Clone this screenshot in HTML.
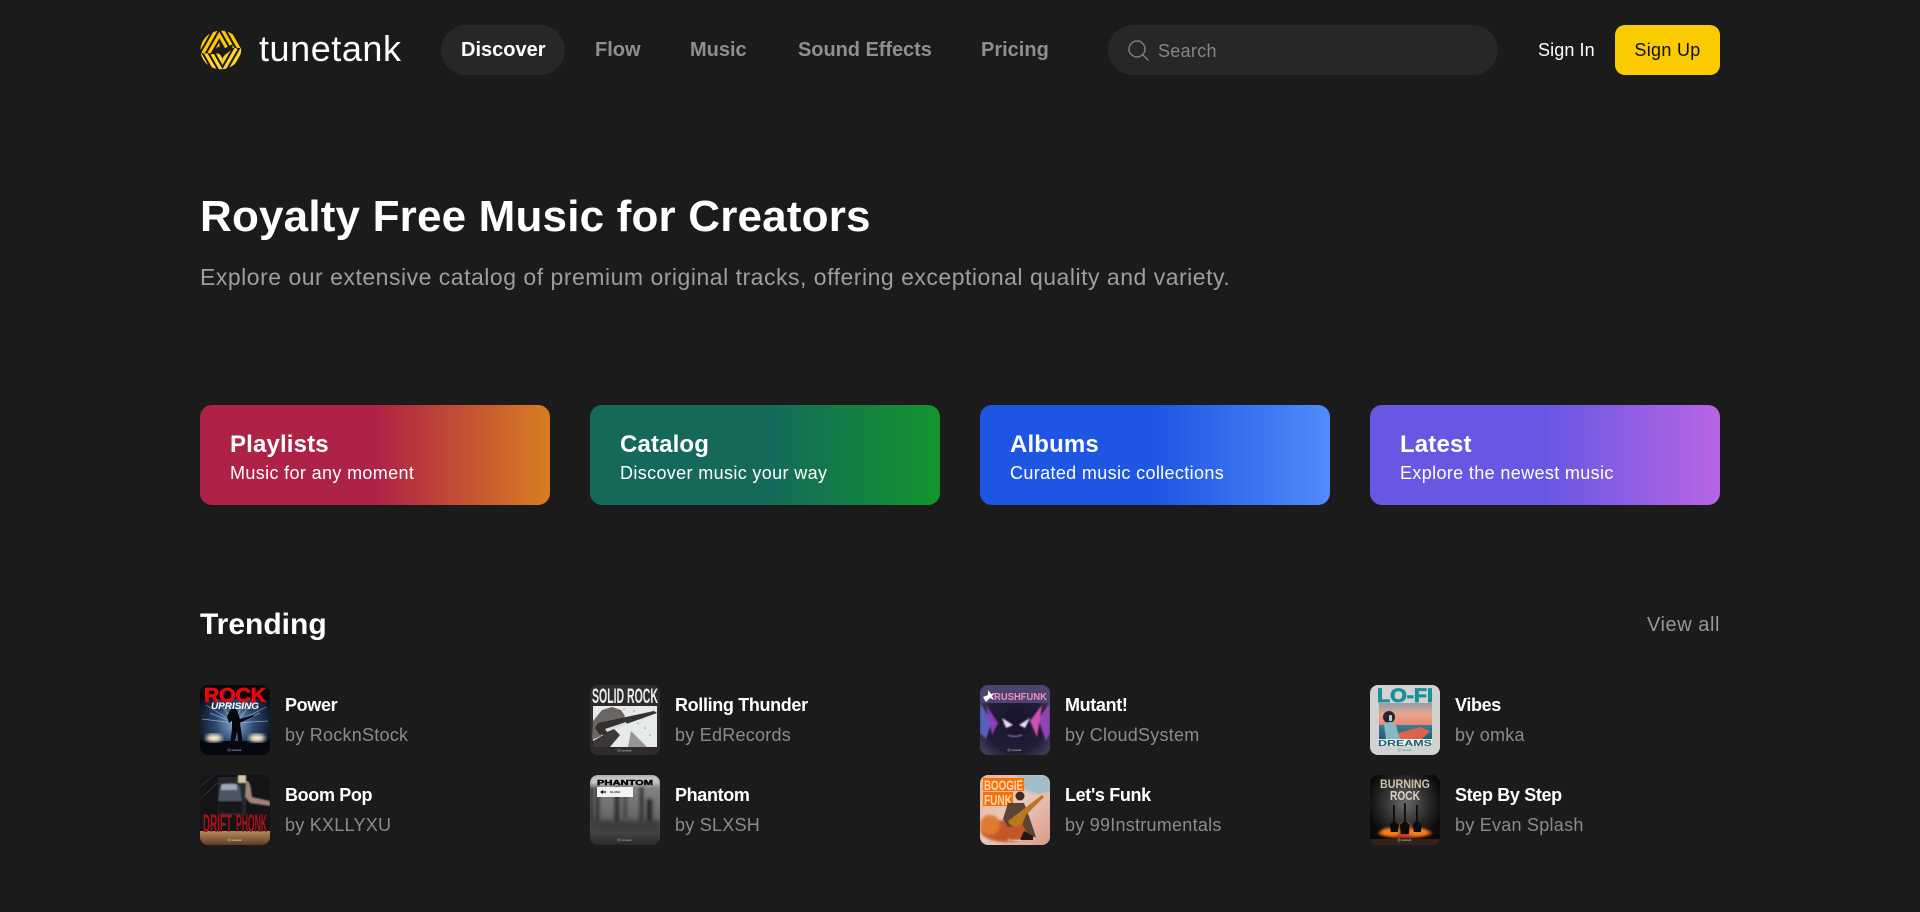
<!DOCTYPE html>
<html lang="en">
<head>
<meta charset="utf-8">
<title>tunetank</title>
<style>
html,body{margin:0;padding:0;background:#1b1b1b;}
body{position:relative;width:1920px;height:912px;overflow:hidden;font-family:"Liberation Sans",sans-serif;color:#fff;}
.t{position:absolute;white-space:nowrap;}
.nav{top:38px;font-size:20px;line-height:24px;font-weight:700;color:#8f8f8f;}
.pill{position:absolute;left:441px;top:25px;width:124px;height:50px;border-radius:25px;background:#272727;}
.search{position:absolute;left:1108px;top:25px;width:390px;height:50px;border-radius:25px;background:#272727;}
.signup{position:absolute;left:1615px;top:25px;width:105px;height:50px;border-radius:10px;background:#facb00;color:#111;font-size:18px;line-height:50px;text-align:center;letter-spacing:.3px;}
.card{position:absolute;top:405px;width:350px;height:100px;border-radius:12px;}
.card b{position:absolute;left:30px;top:25px;font-size:24px;line-height:30px;font-weight:700;white-space:nowrap;letter-spacing:.15px;}
.card span{position:absolute;left:30px;top:56px;font-size:18px;line-height:24px;white-space:nowrap;letter-spacing:.36px;}
.thumb{position:absolute;width:70px;height:70px;border-radius:8px;overflow:hidden;display:block;}
.it{font-size:18px;line-height:24px;font-weight:700;letter-spacing:-.35px;}
.by{font-size:18px;line-height:24px;color:#8f8a86;letter-spacing:.25px;}
svg text{font-family:"Liberation Sans",sans-serif;}
</style>
</head>
<body>

<!-- Header -->
<svg style="position:absolute;left:200px;top:30px" width="42" height="40" viewBox="0 0 125 120">
  <defs>
    <mask id="ring"><ellipse cx="62" cy="60" rx="61" ry="58" fill="#fff"/><path d="M26 74 54 50 68 58 98 42 96 58 68 80 54 70z" fill="#000"/></mask>
    <clipPath id="q1"><rect x="0" y="0" width="58" height="70"/></clipPath>
    <clipPath id="q2"><rect x="58" y="0" width="67" height="54"/></clipPath>
    <clipPath id="q3"><rect x="66" y="54" width="59" height="66"/></clipPath>
    <clipPath id="q4"><rect x="0" y="70" width="66" height="50"/></clipPath>
  </defs>
  <g mask="url(#ring)" stroke-width="9.500" fill="none">
    <path clip-path="url(#q1)" stroke="#ffc800" d="M-10 70 30 0M8 70 48 0M26 70 66 0M44 70 84 0"/>
    <path clip-path="url(#q2)" stroke="#ffc800" d="M46 -5 86 65M64 -5 104 65M82 -5 122 65M100 -5 140 65"/>
    <path clip-path="url(#q3)" stroke="#ffd633" d="M50 125 90 55M68 125 108 55M86 125 126 55M104 125 144 55"/>
    <path clip-path="url(#q4)" stroke="#ffd633" d="M-10 55 30 125M8 55 48 125M26 55 66 125M44 55 84 125"/>
  </g>
</svg>
<div class="t" style="left:259px;top:28px;font-size:36px;line-height:42px;letter-spacing:.55px;">tunetank</div>

<div class="pill"></div>
<div class="t nav" style="left:461px;color:#fff;">Discover</div>
<div class="t nav" style="left:595px;">Flow</div>
<div class="t nav" style="left:690px;">Music</div>
<div class="t nav" style="left:798px;letter-spacing:-.05px;">Sound Effects</div>
<div class="t nav" style="left:981px;">Pricing</div>

<div class="search"></div>
<svg style="position:absolute;left:1127px;top:39px" width="23" height="23" viewBox="0 0 23 23" fill="none" stroke="#7d7d7d" stroke-width="1.5">
  <circle cx="10" cy="10" r="8"/><path d="M16 16 21 21" stroke-linecap="round"/>
</svg>
<div class="t" style="left:1158px;top:39px;font-size:18px;line-height:24px;color:#868686;letter-spacing:.3px;">Search</div>
<div class="t" style="left:1538px;top:38px;font-size:18px;line-height:24px;color:#fff;letter-spacing:.1px;">Sign In</div>
<div class="signup">Sign Up</div>

<!-- Hero -->
<div class="t" style="left:200px;top:190px;font-size:44px;line-height:54px;font-weight:700;letter-spacing:.18px;">Royalty Free Music for Creators</div>
<div class="t" style="left:200px;top:263px;font-size:23px;line-height:28px;color:#a19d99;letter-spacing:.51px;">Explore our extensive catalog of premium original tracks, offering exceptional quality and variety.</div>

<!-- Cards -->
<div class="card" style="left:200px;background:linear-gradient(90deg,#ae2246 50%,#d87e22 100%);"><b>Playlists</b><span>Music for any moment</span></div>
<div class="card" style="left:590px;background:linear-gradient(90deg,#14695b 50%,#12952d 100%);"><b>Catalog</b><span>Discover music your way</span></div>
<div class="card" style="left:980px;background:linear-gradient(90deg,#1e55e3 50%,#508cfa 100%);"><b>Albums</b><span>Curated music collections</span></div>
<div class="card" style="left:1370px;background:linear-gradient(90deg,#6857e3 50%,#b865e5 100%);"><b>Latest</b><span>Explore the newest music</span></div>

<!-- Trending -->
<div class="t" style="left:200px;top:606px;font-size:30px;line-height:38px;font-weight:700;">Trending</div>
<div class="t" style="left:1647px;top:613px;font-size:20px;line-height:24px;color:#9a9693;letter-spacing:.55px;">View all</div>

<!-- 1 Rock Uprising -->
<svg class="thumb" style="left:200px;top:685px" viewBox="0 0 70 70">
  <defs>
    <radialGradient id="a1" cx=".5" cy=".55" r=".6"><stop offset="0" stop-color="#8fb0d6"/><stop offset=".45" stop-color="#2c4a72"/><stop offset="1" stop-color="#060a14"/></radialGradient>
    <filter id="b1"><feGaussianBlur stdDeviation="2"/></filter>
  </defs>
  <rect width="70" height="70" fill="url(#a1)"/>
  <rect width="70" height="14" fill="#07070c"/>
  <g stroke="#c4d8f0" stroke-width=".7" opacity=".65"><path d="M35 38 6 20M35 38 18 16M35 38 27 14M35 38 44 14M35 38 54 16M35 38 66 22M35 38 2 34M35 38 68 36M35 38 10 28M35 38 60 28"/></g>
  <rect y="56" width="70" height="14" fill="#050810"/>
  <ellipse cx="14" cy="53" rx="8" ry="4" fill="#fff2d0" filter="url(#b1)"/>
  <ellipse cx="57" cy="53" rx="8" ry="4" fill="#fff2d0" filter="url(#b1)"/>
  <path d="M30 25c3-3 8-1 8 3l2 6 13-4 1 1-12 6-2 1 1 7 2 15h-4l-2-13-3 13h-4l2-16 0-8-3 2-2-6z" fill="#06080d"/>
  <text x="4" y="17" font-size="20" font-weight="700" fill="#e6060e" stroke="#e6060e" stroke-width=".8" textLength="62" lengthAdjust="spacingAndGlyphs">ROCK</text>
  <text x="11" y="24" font-size="9" font-weight="700" font-style="italic" fill="#fff" textLength="48" lengthAdjust="spacingAndGlyphs">UPRISING</text>
  <circle cx="29" cy="65" r="1.2" fill="none" stroke="#ccc" stroke-width=".4"/>
  <text x="31.5" y="66" font-size="2.6" fill="#ccc">tunetank</text>
</svg>

<!-- 2 Drift Phonk -->
<svg class="thumb" style="left:200px;top:775px" viewBox="0 0 70 70">
  <defs>
    <linearGradient id="a2" x1="0" y1="0" x2="0" y2="1"><stop offset="0" stop-color="#b98a5e"/><stop offset="1" stop-color="#5e3c22"/></linearGradient>
    <filter id="b2"><feGaussianBlur stdDeviation=".8"/></filter>
  </defs>
  <rect width="70" height="70" fill="#141416"/>
  <g stroke="#2e2e30" stroke-width="1"><path d="M0 12 14 0M0 24 22 4"/></g>
  <rect x="18" y="2" width="28" height="38" fill="#22282e"/>
  <g filter="url(#b2)">
    <rect x="38" y="0" width="8" height="8" fill="#d5c7a8"/>
    <path d="M46 6c3 0 4 2 5 8l1 8 18 4v5l-20-3-5-6z" fill="#a08277"/>
    <path d="M20 12c2-5 18-5 20 0l2 14H18z" fill="#4c5762"/>
    <rect x="21" y="9" width="16" height="6" fill="#9aa9b5"/>
    <rect x="18" y="26" width="24" height="12" fill="#15181c"/>
  </g>
  <rect y="56" width="70" height="14" fill="url(#a2)"/>
  <text x="3" y="57" font-size="25" font-weight="700" fill="#a8121c" textLength="29" lengthAdjust="spacingAndGlyphs">DRIFT</text>
  <text x="36" y="57" font-size="25" font-weight="700" fill="#a8121c" textLength="31" lengthAdjust="spacingAndGlyphs">PHONK</text>
  <circle cx="29" cy="65" r="1.2" fill="none" stroke="#eee" stroke-width=".4"/>
  <text x="31.5" y="66" font-size="2.6" fill="#eee">tunetank</text>
</svg>

<!-- 3 Solid Rock -->
<svg class="thumb" style="left:590px;top:685px" viewBox="0 0 70 70">
  <rect width="70" height="70" fill="#2f2b2c"/>
  <text x="2" y="18" font-size="21" font-weight="700" fill="#e9eceb" textLength="66" lengthAdjust="spacingAndGlyphs">SOLID ROCK</text>
  <rect x="3" y="21" width="64" height="41" fill="#e6ebe9"/>
  <path d="M3 36 12 25l10-3 9 3 4 6-6 8-12 4-6 8-9 4z" fill="#6a6664"/>
  <path d="M8 38 64 26l3 2-42 15-7 8-9-2-4-6z" fill="#33302f"/>
  <path d="M15 44 36 37l1 2-20 8z" fill="#d8dcda"/>
  <path d="M3 56 24 44l6 6-10 12H3z" fill="#3c3837"/>
  <path d="M38 62 41 46l10 10 6 6z" fill="#55504e" opacity=".55"/>
  <g fill="#777" opacity=".7"><circle cx="48" cy="38" r=".8"/><circle cx="55" cy="43" r=".8"/><circle cx="60" cy="50" r=".8"/><circle cx="44" cy="26" r=".8"/><circle cx="34" cy="24" r=".8"/><circle cx="52" cy="34" r=".6"/></g>
  <circle cx="29" cy="65.5" r="1.2" fill="none" stroke="#ccc" stroke-width=".4"/>
  <text x="31.5" y="66.5" font-size="2.6" fill="#ccc">tunetank</text>
</svg>

<!-- 4 Phantom -->
<svg class="thumb" style="left:590px;top:775px" viewBox="0 0 70 70">
  <defs>
    <linearGradient id="a4" x1="0" y1="0" x2="0" y2="1"><stop offset="0" stop-color="#8f8f8f"/><stop offset=".55" stop-color="#6a6a6a"/><stop offset="1" stop-color="#2a2a2a"/></linearGradient>
    <filter id="b4" x="-20%" y="-20%" width="140%" height="140%"><feGaussianBlur stdDeviation="1.8"/></filter>
  </defs>
  <rect width="70" height="70" fill="url(#a4)"/>
  <g filter="url(#b4)" fill="#222">
    <rect x="6" y="0" width="3" height="46"/><rect x="25" y="4" width="4" height="42"/><rect x="34" y="0" width="2" height="44"/><rect x="50" y="0" width="3" height="46"/><rect x="57" y="24" width="5" height="22"/><rect x="0" y="0" width="3" height="46"/>
    <rect x="0" y="46" width="70" height="10" fill="#3d3d3d"/>
    <rect x="0" y="0" width="70" height="10" fill="#c6c6c6"/>
  </g>
  <text x="7" y="10" font-size="7" font-weight="700" fill="#050505" stroke="#050505" stroke-width=".4" textLength="56" lengthAdjust="spacingAndGlyphs">PHANTOM</text>
  <rect x="7" y="12" width="36" height="10" fill="#f3f3f3"/>
  <path d="M10 17l3-2v1.4h3v1.2h-3V19z" fill="#111"/>
  <text x="20" y="18" font-size="3" font-weight="700" fill="#111">SLXSH</text>
  <circle cx="29" cy="65" r="1.2" fill="none" stroke="#bbb" stroke-width=".4"/>
  <text x="31.5" y="66" font-size="2.6" fill="#bbb">tunetank</text>
</svg>

<!-- 5 Krush Funk -->
<svg class="thumb" style="left:980px;top:685px" viewBox="0 0 70 70">
  <defs>
    <radialGradient id="a5" cx=".5" cy=".55" r=".6"><stop offset="0" stop-color="#18132b"/><stop offset=".7" stop-color="#221d36"/><stop offset="1" stop-color="#403d5a"/></radialGradient>
    <filter id="b5"><feGaussianBlur stdDeviation=".8"/></filter>
  </defs>
  <rect width="70" height="70" fill="url(#a5)"/>
  <rect width="70" height="18" fill="#4c4470"/>
  <g filter="url(#b5)">
    <path d="M0 18 12 36 6 54 0 48z" fill="#5260bc"/>
    <path d="M70 18 58 34 66 56 70 48z" fill="#9045b4"/>
    <path d="M6 20 18 38 12 50z" fill="#8d3db5"/>
    <path d="M62 20 50 36 57 52z" fill="#d24fb5"/>
    <path d="M22 33 33 40 26 43z" fill="#eadcff"/>
    <path d="M50 33 39 40 45 43z" fill="#eadcff"/>
    <path d="M28 50q7 3 14 0" fill="none" stroke="#a08ad8" stroke-width="1"/>
  </g>
  <path d="M3 12 8 10 8 5 11 9 15 8 12 11 14 15 10 13 6 17z" fill="#fff"/>
  <text x="14" y="15" font-size="10" font-weight="700" fill="#f28cc0" textLength="53" lengthAdjust="spacingAndGlyphs">RUSHFUNK</text>
  <circle cx="29" cy="65" r="1.2" fill="none" stroke="#ccc" stroke-width=".4"/>
  <text x="31.5" y="66" font-size="2.6" fill="#ccc">tunetank</text>
</svg>

<!-- 6 Boogie Funk -->
<svg class="thumb" style="left:980px;top:775px" viewBox="0 0 70 70">
  <defs>
    <linearGradient id="a6" x1="0" y1="0" x2="1" y2="1"><stop offset="0" stop-color="#e8b49a"/><stop offset=".5" stop-color="#ebc8bc"/><stop offset="1" stop-color="#d99a88"/></linearGradient>
    <filter id="b6"><feGaussianBlur stdDeviation="1.4"/></filter>
  </defs>
  <rect width="70" height="70" fill="url(#a6)"/>
  <path d="M38 0h32v16c-10 5-22 3-32-6z" fill="#88bace" opacity=".75" filter="url(#b6)"/>
  <ellipse cx="26" cy="56" rx="25" ry="11" fill="#c0582a" filter="url(#b6)"/>
  <ellipse cx="10" cy="50" rx="10" ry="10" fill="#e07c30" filter="url(#b6)"/>
  <rect x="3" y="3" width="41" height="13" fill="#f6700e"/>
  <text x="4" y="15" font-size="14" font-weight="700" fill="#ffd9a8" textLength="39" lengthAdjust="spacingAndGlyphs">BOOGIE</text>
  <rect x="3" y="17" width="30" height="14" fill="#f6700e"/>
  <text x="4" y="30" font-size="15" font-weight="700" fill="#ffd9a8" textLength="28" lengthAdjust="spacingAndGlyphs">FUNK</text>
  <circle cx="40" cy="21" r="4.5" fill="#3a2a20"/>
  <path d="M28 28h16l6 16 6 18h-7l-6-12-15 2-5-8z" fill="#5a4436"/>
  <path d="M28 46 62 20l2 2-18 18-4 10c-5 3-12 2-14-4z" fill="#b8761e"/>
  <path d="M44 56l9 5v4H40z" fill="#241812"/>
  <circle cx="29" cy="65" r="1.2" fill="none" stroke="#fff" stroke-width=".4"/>
  <text x="31.5" y="66" font-size="2.6" fill="#fff">tunetank</text>
</svg>

<!-- 7 Lo-Fi Dreams -->
<svg class="thumb" style="left:1370px;top:685px" viewBox="0 0 70 70">
  <defs>
    <linearGradient id="a7" x1="0" y1="0" x2="0" y2="1"><stop offset="0" stop-color="#8f9fa8"/><stop offset=".3" stop-color="#e8a58c"/><stop offset=".6" stop-color="#e88a70"/><stop offset=".62" stop-color="#3a7c92"/><stop offset="1" stop-color="#1e5c74"/></linearGradient>
  </defs>
  <rect width="70" height="70" fill="#d2d2d0"/>
  <text x="7" y="17" font-size="19" font-weight="700" fill="#169099" stroke="#169099" stroke-width=".8" textLength="56" lengthAdjust="spacingAndGlyphs">LO-FI</text>
  <rect x="9" y="18" width="53" height="36" fill="url(#a7)"/>
  <circle cx="19" cy="32" r="6" fill="#2b2430"/>
  <path d="M14 40c2-4 10-4 12 0l2 8 6 6H16z" fill="#86bac2"/>
  <path d="M28 48 50 42l10 4-8 8H30z" fill="#d9664c"/>
  <rect x="19" y="30" width="3" height="6" rx="1" fill="#b6d2d8"/>
  <rect x="8" y="54" width="54" height="7" fill="#eeeeec"/>
  <text x="8" y="61" font-size="8" font-weight="700" fill="#0f5f70" textLength="54" lengthAdjust="spacingAndGlyphs">DREAMS</text>
  <circle cx="29" cy="65" r="1.2" fill="none" stroke="#2a8d97" stroke-width=".4"/>
  <text x="31.5" y="66" font-size="2.6" fill="#2a8d97">tunetank</text>
</svg>

<!-- 8 Burning Rock -->
<svg class="thumb" style="left:1370px;top:775px" viewBox="0 0 70 70">
  <defs>
    <radialGradient id="a8" cx=".5" cy=".4" r=".55"><stop offset="0" stop-color="#6a6968"/><stop offset=".6" stop-color="#2c2c2c"/><stop offset="1" stop-color="#0a0a0a"/></radialGradient>
    <filter id="b8" x="-20%" y="-50%" width="140%" height="200%"><feGaussianBlur stdDeviation="1.3"/></filter>
  </defs>
  <rect width="70" height="70" fill="url(#a8)"/>
  <g filter="url(#b8)">
    <ellipse cx="35" cy="58" rx="27" ry="5" fill="#c9431a"/>
    <ellipse cx="20" cy="57" rx="9" ry="4" fill="#f5801e"/>
    <ellipse cx="48" cy="57" rx="10" ry="4" fill="#f5801e"/>
    <ellipse cx="35" cy="52" rx="6" ry="5" fill="#e0601a"/>
  </g>
  <g fill="#0c0c0c">
    <path d="M23 30h1.800v16l4 4-1 7h-7l-1-7 3.200-4z"/>
    <path d="M34 28h1.800v18l4 4-1 9h-8l-1-9 4.200-4z"/>
    <path d="M46 30h1.800v16l4 4-1 7h-7l-1-7 3.200-4z"/>
  </g>
  <rect y="64" width="70" height="6" fill="#33211a"/>
  <text x="10" y="13" font-size="12" font-weight="700" fill="#cfc3a8" textLength="50" lengthAdjust="spacingAndGlyphs">BURNING</text>
  <text x="20" y="25" font-size="13" font-weight="700" fill="#d6d2c8" textLength="30" lengthAdjust="spacingAndGlyphs">ROCK</text>
  <circle cx="29" cy="65" r="1.2" fill="none" stroke="#ddd" stroke-width=".4"/>
  <text x="31.5" y="66" font-size="2.6" fill="#ddd">tunetank</text>
</svg>

<!-- Track text -->
<div class="t it" style="left:285px;top:693px;">Power</div>
<div class="t by" style="left:285px;top:723px;">by RocknStock</div>
<div class="t it" style="left:285px;top:783px;">Boom Pop</div>
<div class="t by" style="left:285px;top:813px;">by KXLLYXU</div>

<div class="t it" style="left:675px;top:693px;">Rolling Thunder</div>
<div class="t by" style="left:675px;top:723px;">by EdRecords</div>
<div class="t it" style="left:675px;top:783px;">Phantom</div>
<div class="t by" style="left:675px;top:813px;">by SLXSH</div>

<div class="t it" style="left:1065px;top:693px;">Mutant!</div>
<div class="t by" style="left:1065px;top:723px;">by CloudSystem</div>
<div class="t it" style="left:1065px;top:783px;">Let's Funk</div>
<div class="t by" style="left:1065px;top:813px;">by 99Instrumentals</div>

<div class="t it" style="left:1455px;top:693px;">Vibes</div>
<div class="t by" style="left:1455px;top:723px;">by omka</div>
<div class="t it" style="left:1455px;top:783px;">Step By Step</div>
<div class="t by" style="left:1455px;top:813px;">by Evan Splash</div>

</body>
</html>
